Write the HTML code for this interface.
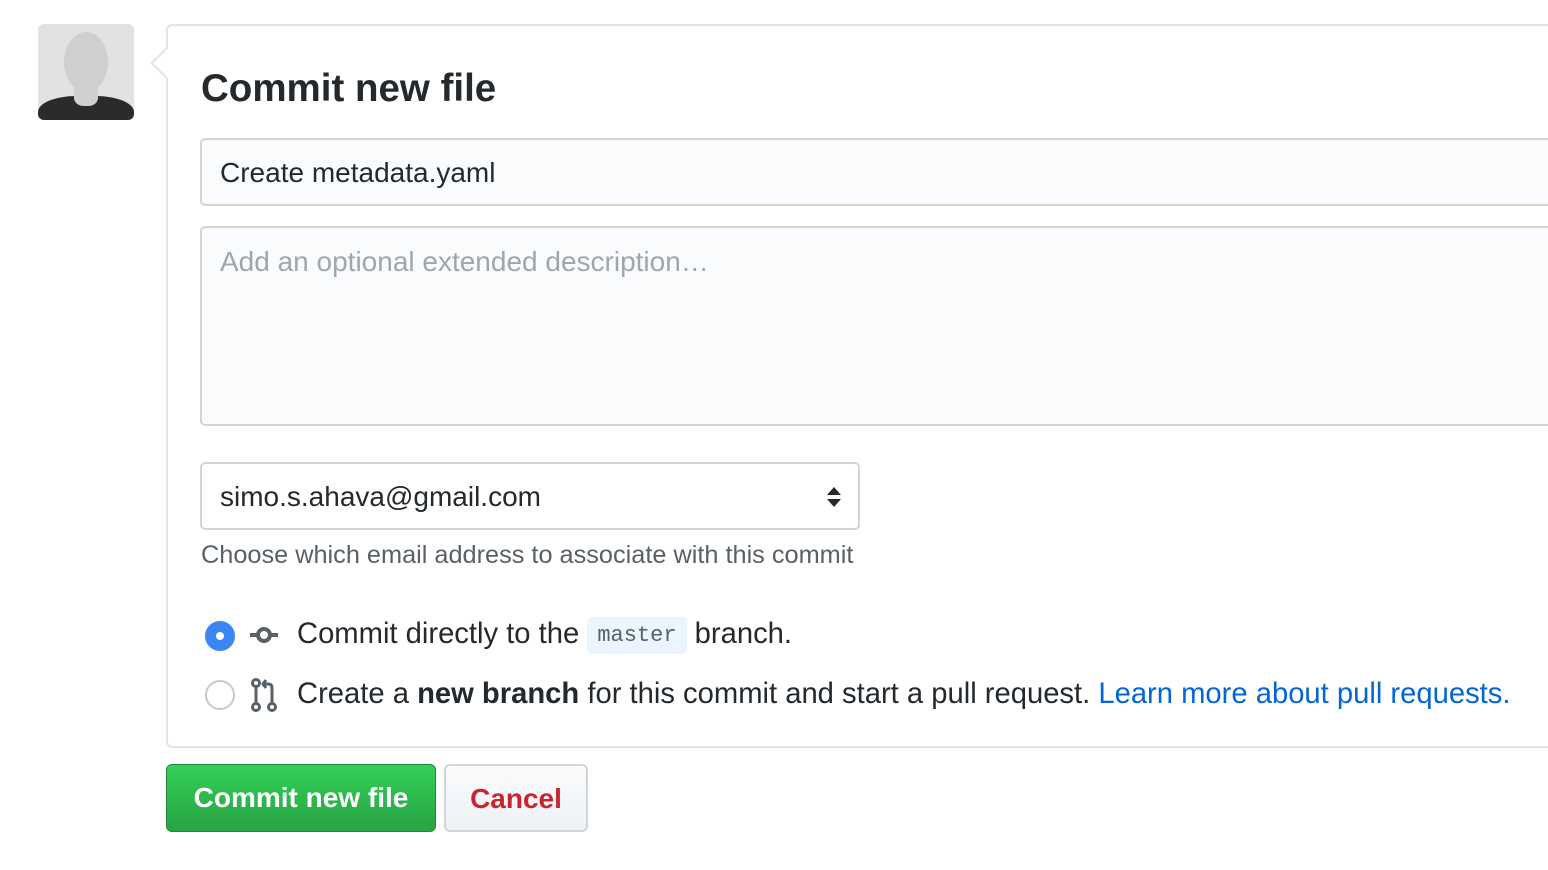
<!DOCTYPE html>
<html><head><meta charset="utf-8"><style>
*{box-sizing:border-box;margin:0;padding:0}
body{width:1548px;height:870px;background:#fff;font-family:"Liberation Sans",Arial,sans-serif;color:#24292e;position:relative;overflow:hidden}
.abs{position:absolute}
.avatar{left:38px;top:24px;width:96px;height:96px;border-radius:6px;background:#e2e2e2;overflow:hidden}
.panel{left:166px;top:24px;width:1400px;height:724px;border:2px solid #e1e4e8;border-right:none;border-radius:6px 0 0 6px}
.arrow{left:155px;top:52px;width:22px;height:22px;background:#fff;border-left:2px solid #e1e4e8;border-bottom:2px solid #e1e4e8;transform:rotate(45deg)}
h1{position:absolute;left:201px;top:67px;font-size:38.5px;font-weight:bold;color:#24292e}
.inp{left:200px;width:1400px;border:2px solid #d1d5da;border-radius:5px;background:#fafbfc;font-size:28px;padding-left:18px}
.note{left:201px;top:541px;font-size:25.3px;color:#586069}
.row{font-size:29.2px;color:#24292e;white-space:nowrap}
code{font-family:"Liberation Mono",monospace;font-size:22px;background:#eaf5ff;color:#586069;border-radius:5px;padding:6px 10px;position:relative;top:-2px}
.btn{top:764px;height:68px;border-radius:6px;font-size:28px;font-weight:bold;text-align:center;line-height:66px}
</style></head><body>
<div class="abs avatar">
<div class="abs" style="left:26px;top:8px;width:44px;height:60px;border-radius:50%;background:#cfcfcf"></div>
<div class="abs" style="left:0;top:72px;width:96px;height:40px;border-radius:40% 40% 0 0;background:#2b2b2b"></div>
<div class="abs" style="left:36px;top:62px;width:24px;height:20px;background:#d0d0d0;border-radius:0 0 40% 40%"></div>
</div>
<div class="abs panel"></div>
<div class="abs arrow"></div>
<h1>Commit new file</h1>
<div class="abs inp" style="top:138px;height:68px;line-height:66px">Create metadata.yaml</div>
<div class="abs inp" style="top:226px;height:200px;padding-top:18px;color:#a0a6ad">Add an optional extended description…</div>
<div class="abs inp" style="top:462px;width:660px;height:68px;line-height:66px;background:#fff">simo.s.ahava@gmail.com
<svg class="abs" style="right:16px;top:22px" width="16" height="22" viewBox="0 0 16 22"><path d="M8 1L15 9H1z M8 21L1 13H15z" fill="#24292e"/></svg></div>
<div class="abs note">Choose which email address to associate with this commit</div>
<div class="abs" style="left:205px;top:621px;width:30px;height:30px;border-radius:50%;background:#3a86f5"><div style="margin:11px;width:8px;height:8px;border-radius:50%;background:#fff"></div></div>
<svg class="abs" style="left:248px;top:622px" width="32" height="26" viewBox="0 0 32 26"><circle cx="16" cy="13" r="6" fill="none" stroke="#586069" stroke-width="4"/><path d="M2 13H10M22 13H30" stroke="#586069" stroke-width="4"/></svg>
<div class="abs row" style="left:297px;top:618px">Commit directly to the <code>master</code> branch.</div>
<div class="abs" style="left:205px;top:680px;width:30px;height:30px;border-radius:50%;border:2px solid #c7c9cc;background:#fff"></div>
<svg class="abs" style="left:250px;top:678px" width="28" height="34" viewBox="0 0 28 34"><g fill="none" stroke="#586069" stroke-width="3"><circle cx="6" cy="5" r="3.5"/><circle cx="6" cy="29" r="3.5"/><circle cx="22" cy="29" r="3.5"/><path d="M6 9V25M22 25V10Q22 6 18 6H14"/><path d="M16 2L13 6L16 10"/></g></svg>
<div class="abs row" style="left:297px;top:678px">Create a <b>new branch</b> for this commit and start a pull request. <span style="color:#0366d6">Learn more about pull requests.</span></div>
<div class="abs btn" style="left:166px;width:270px;background:linear-gradient(#34d058,#28a745 90%);border:1px solid #22863a;color:#fff">Commit new file</div>
<div class="abs btn" style="left:444px;width:144px;background:linear-gradient(#fafbfc,#eff3f6 90%);border:2px solid #d1d5da;color:#cb2431">Cancel</div>
</body></html>
